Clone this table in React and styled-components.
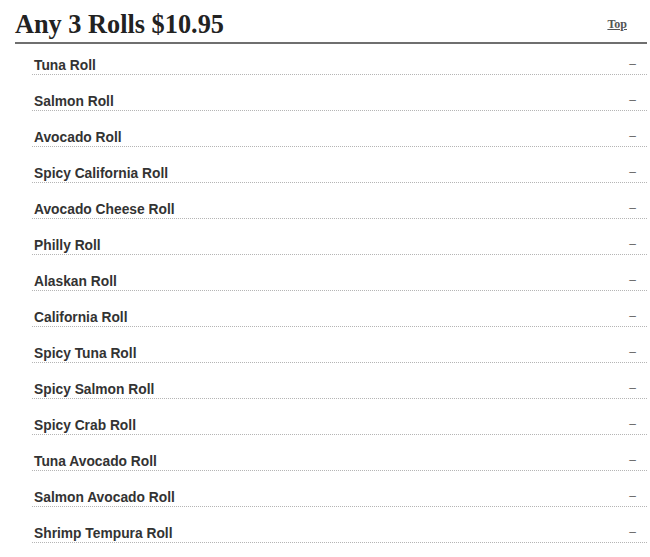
import React from "react";
import styled, { createGlobalStyle } from "styled-components";

const Global = createGlobalStyle`
  html, body { margin: 0; padding: 0; background: #fff; }
  body { font-family: "Liberation Sans", Arial, sans-serif; }
`;

const Page = styled.div`
  padding: 9px 3px 0 15px;
`;

const Header = styled.div`
  display: flex;
  justify-content: space-between;
  align-items: center;
  padding-bottom: 2px;
  border-bottom: 2px solid #6f6f6f;
`;

const Title = styled.h2`
  margin: 0;
  font-family: "Liberation Serif", "Times New Roman", serif;
  font-weight: bold;
  font-size: 26.3px;
  line-height: 31px;
  color: #222;
`;

const TopLink = styled.a`
  font-family: "Liberation Serif", "Times New Roman", serif;
  font-weight: bold;
  font-size: 12px;
  color: #555;
  text-decoration: underline;
  margin-right: 20px;
  margin-bottom: 1px;
`;

const List = styled.ul`
  list-style: none;
  margin: 0 0 0 17px;
  padding: 0;
  display: flex;
  flex-direction: column;
  gap: 5px;
`;

const Row = styled.li`
  box-sizing: border-box;
  height: 31px;
  display: flex;
  justify-content: space-between;
  align-items: flex-end;
  padding: 0 0 0 2px;
  border-bottom: 1px dotted #b5b5b5;
`;

const Name = styled.span`
  font-family: "Liberation Sans", Arial, sans-serif;
  font-weight: bold;
  font-size: 13.8px;
  line-height: 16px;
  color: #333;
`;

const Price = styled.span`
  font-family: "Liberation Sans", Arial, sans-serif;
  font-size: 12px;
  line-height: 16px;
  color: #666;
  margin-right: 11px;
  padding-bottom: 2px;
`;

const rolls = [
  "Tuna Roll",
  "Salmon Roll",
  "Avocado Roll",
  "Spicy California Roll",
  "Avocado Cheese Roll",
  "Philly Roll",
  "Alaskan Roll",
  "California Roll",
  "Spicy Tuna Roll",
  "Spicy Salmon Roll",
  "Spicy Crab Roll",
  "Tuna Avocado Roll",
  "Salmon Avocado Roll",
  "Shrimp Tempura Roll",
];

export default function App() {
  return (
    <>
      <Global />
      <Page>
        <Header>
          <Title>Any 3 Rolls $10.95</Title>
          <TopLink href="#">Top</TopLink>
        </Header>
        <List>
          {rolls.map((r) => (
            <Row key={r}>
              <Name>{r}</Name>
              <Price>–</Price>
            </Row>
          ))}
        </List>
      </Page>
    </>
  );
}
